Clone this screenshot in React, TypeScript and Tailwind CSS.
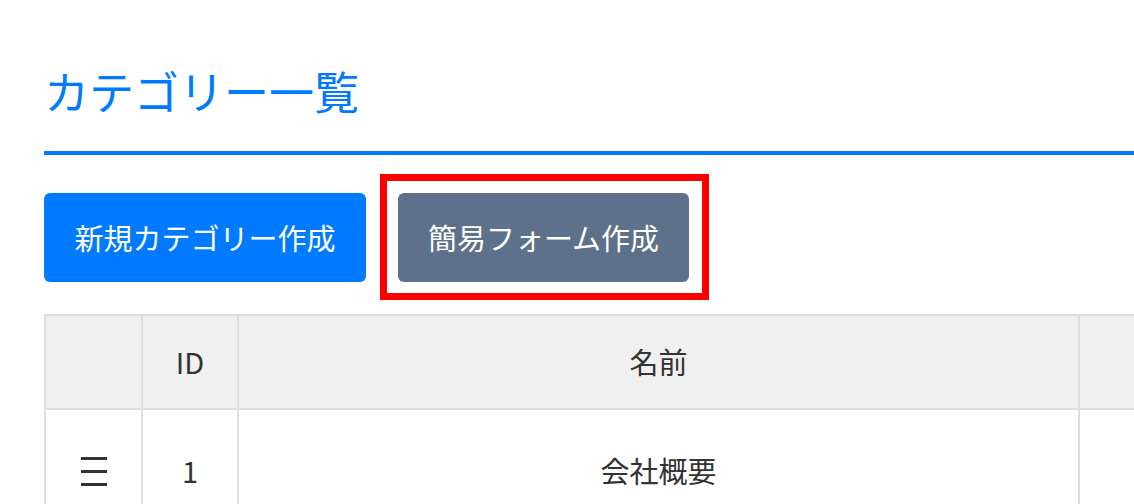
import React from 'react';

const FONT = '"Noto Sans CJK JP", "Noto Sans", sans-serif';

const HandleIcon = () => (
  <div className="mx-auto flex w-[26px] flex-col gap-[10px]">
    <span className="block h-[3px] w-full bg-[#333]" />
    <span className="block h-[3px] w-full bg-[#333]" />
    <span className="block h-[3px] w-full bg-[#333]" />
  </div>
);

const categories = [{ id: 1, name: '会社概要' }];

export default function App() {
  return (
    <div className="h-[504px] w-[1134px] overflow-hidden bg-white" style={{ fontFamily: FONT }}>
      <div className="w-[1300px] pl-[44px]">
        {/* Title */}
        <h1 className="mt-[68px] text-[45px] leading-none font-normal text-[#007bff]">カテゴリー一覧</h1>
        <div className="mt-[38px] h-[4px] w-full bg-[#007bff]" />

        {/* Actions */}
        <div className="mt-[38px] flex gap-[32px]">
          <button className="flex h-[89px] w-[322px] items-center justify-center rounded-[6px] bg-[#007bff] text-[29px] text-white">
            新規カテゴリー作成
          </button>
          <button className="relative flex h-[89px] w-[291px] items-center justify-center rounded-[6px] bg-[#5e718a] text-[29px] text-white">
            簡易フォーム作成
            <span className="pointer-events-none absolute -top-[19px] -bottom-[18px] -left-[18px] -right-[20px] border-[7px] border-[#ff0000]" />
          </button>
        </div>

        {/* Table */}
        <table className="mt-[32px] w-[1256px] table-fixed border-collapse text-[29px] text-[#333]">
          <colgroup>
            <col className="w-[97px]" />
            <col className="w-[96px]" />
            <col className="w-[841px]" />
            <col />
          </colgroup>
          <thead>
            <tr className="h-[94px] bg-[#f0f0f0]">
              <th className="border-2 border-[#dedede] font-normal" />
              <th className="border-2 border-[#dedede] font-normal">ID</th>
              <th className="border-2 border-[#dedede] font-normal">名前</th>
              <th className="border-2 border-[#dedede] font-normal" />
            </tr>
          </thead>
          <tbody>
            {categories.map((c) => (
              <tr key={c.id} className="h-[124px]">
                <td className="border-2 border-[#dedede] text-center">
                  <HandleIcon />
                </td>
                <td className="border-2 border-[#dedede] text-center">{c.id}</td>
                <td className="border-2 border-[#dedede] text-center">{c.name}</td>
                <td className="border-2 border-[#dedede]" />
              </tr>
            ))}
          </tbody>
        </table>
      </div>
    </div>
  );
}
